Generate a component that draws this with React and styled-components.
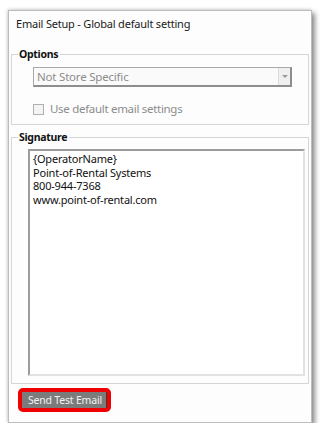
import React from "react";
import styled, { createGlobalStyle } from "styled-components";

const Global = createGlobalStyle`
  html, body { margin: 0; padding: 0; background: #ffffff; }
  body { font-family: "Segoe UI", "Noto Sans", "Open Sans", sans-serif; }
  * { box-sizing: border-box; }
`;

const Panel = styled.div`
  width: 304px;
  height: 413px;
  margin: 10px 0 0 8px;
  background: #fdfdfd;
  border: 1px solid #bdbdbd;
  box-shadow: 3px 3px 5px rgba(0, 0, 0, 0.45), -1px -1px 3px rgba(0, 0, 0, 0.15);
  display: flex;
  flex-direction: column;
  padding: 0 2px 0 2px;
`;

const Title = styled.div`
  height: 35px;
  padding: 5px 0 0 5px;
  font-size: 11px;
  letter-spacing: -0.2px;
  line-height: 16px;
  color: #1a1a1a;
`;

const Group = styled.fieldset`
  margin: 0;
  padding: 0 4px 0 6px;
  border: 1px solid #d6d6d6;
  height: ${(p) => p.$h}px;
  min-width: 0;
`;

const Legend = styled.legend`
  padding: 0 2px 0 1px;
  font-size: 10.5px;
  font-weight: 700;
  letter-spacing: -0.3px;
  line-height: 16px;
  color: #111;
`;

const Select = styled.div`
  margin: 5px 0 0 15px;
  width: 259px;
  height: 20px;
  display: flex;
  background: #fafafa;
  border-top: 1px solid #a9a9a9;
  border-left: 1px solid #a9a9a9;
  border-right: 2px solid #8e8e8e;
  border-bottom: 2px solid #8e8e8e;
`;

const SelectText = styled.div`
  flex: 1;
  padding-left: 3px;
  font-size: 11.5px;
  letter-spacing: -0.2px;
  line-height: 17px;
  color: #8c8c8c;
`;

const Arrow = styled.div`
  width: 12px;
  display: flex;
  align-items: center;
  justify-content: center;
  background: #f0f0f0;
  border-left: 1px solid #dcdcdc;
  &::after {
    content: "";
    border-left: 3px solid transparent;
    border-right: 3px solid transparent;
    border-top: 3px solid #9a9a9a;
  }
`;

const CheckRow = styled.div`
  margin: 14px 0 0 15px;
  display: flex;
  align-items: center;
  gap: 6px;
  font-size: 11.5px;
  letter-spacing: -0.3px;
  line-height: 16px;
  color: #8c8c8c;
`;

const Box = styled.span`
  width: 11px;
  height: 11px;
  border: 1px solid #b0b0b0;
  background: #f4f4f4;
`;

const Spacer = styled.div`
  height: 4px;
`;

const TextArea = styled.div`
  margin: 4px 0 0 10px;
  width: 277px;
  height: 227px;
  background: #ffffff;
  border-top: 2px solid #9c9c9c;
  border-left: 2px solid #9c9c9c;
  border-right: 2px solid #e2e2e2;
  border-bottom: 2px solid #e2e2e2;
  padding: 1px 0 0 3px;
  font-size: 11px;
  letter-spacing: -0.2px;
  line-height: 13.5px;
  color: #111;
`;

const Line = styled.div``;

const ButtonRow = styled.div`
  padding: 4px 0 0 7px;
  display: flex;
`;

const Highlight = styled.div`
  border: 4px solid #f00000;
  border-radius: 5px;
  display: flex;
`;

const Button = styled.div`
  width: 85px;
  height: 16px;
  background: #7b7b7b;
  border-right: 1px solid #3a3a3a;
  color: #f2f2f2;
  font-size: 10.5px;
  letter-spacing: -0.2px;
  line-height: 16px;
  padding-left: 6px;
  white-space: nowrap;
`;

export default function App() {
  return (
    <>
      <Global />
      <Panel>
        <Title>Email Setup - Global default setting</Title>
        <Group $h={79}>
          <Legend>Options</Legend>
          <Select>
            <SelectText>Not Store Specific</SelectText>
            <Arrow />
          </Select>
          <CheckRow>
            <Box />
            <span>Use default email settings</span>
          </CheckRow>
        </Group>
        <Spacer />
        <Group $h={255}>
          <Legend>Signature</Legend>
          <TextArea>
            <Line>{"{OperatorName}"}</Line>
            <Line>Point-of-Rental Systems</Line>
            <Line>800-944-7368</Line>
            <Line>www.point-of-rental.com</Line>
          </TextArea>
        </Group>
        <ButtonRow>
          <Highlight>
            <Button>Send Test Email</Button>
          </Highlight>
        </ButtonRow>
      </Panel>
    </>
  );
}
